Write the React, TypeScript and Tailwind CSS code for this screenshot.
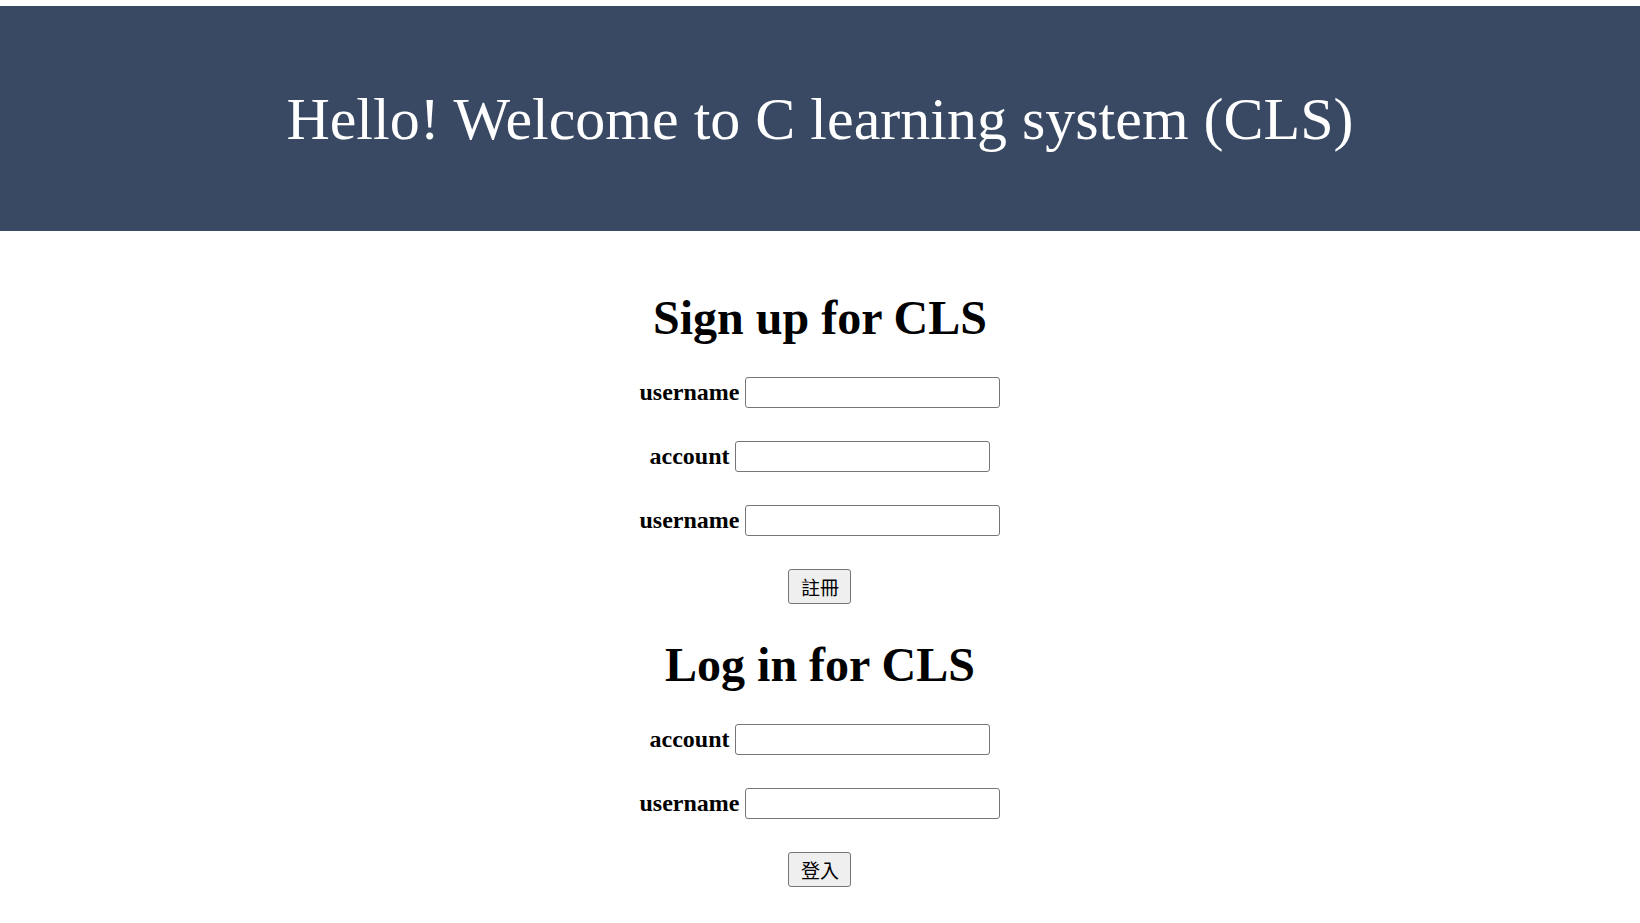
const signUpFields = ["username", "account", "username"];
const logInFields = ["account", "username"];

const Field = ({ label }: { label: string }) => (
  <div className="flex items-center justify-center gap-[6px]">
    <label className="text-[24px] font-bold leading-[27px] text-black">{label}</label>
    <input
      type="text"
      className="box-border h-[31px] w-[255px] rounded-[3px] border border-[#767676] bg-white px-1 text-[16px] outline-none"
    />
  </div>
);

const FormSection = ({
  title,
  fields,
  action,
  className,
}: {
  title: string;
  fields: string[];
  action: string;
  className: string;
}) => (
  <section className={`flex flex-col items-center ${className}`}>
    <h2 className="text-[48px] font-bold leading-[53px] text-black">{title}</h2>
    <div className="mt-[33px] flex flex-col gap-[33px]">
      {fields.map((f, i) => (
        <Field key={`${f}-${i}`} label={f} />
      ))}
    </div>
    <button
      type="button"
      className="mt-[33px] box-border flex h-[35px] w-[63px] items-center justify-center rounded-[3px] border border-[#767676] bg-[#efefef] font-['Noto_Sans_CJK_TC',sans-serif] text-[19px] leading-none text-black"
    >
      {action}
    </button>
  </section>
);

const App = () => {
  return (
    <div className="min-h-screen bg-white font-['Liberation_Serif','Times_New_Roman',serif]">
      <header className="mt-[6px] flex h-[225px] items-center justify-center bg-[#394963]">
        <h1 className="text-[60px] font-normal leading-[66px] text-white">
          Hello! Welcome to C learning system (CLS)
        </h1>
      </header>
      <main className="flex flex-col items-center">
        <FormSection title="Sign up for CLS" fields={signUpFields} action="註冊" className="mt-[60px]" />
        <FormSection title="Log in for CLS" fields={logInFields} action="登入" className="mt-[34px]" />
      </main>
    </div>
  );
};

export default App;
